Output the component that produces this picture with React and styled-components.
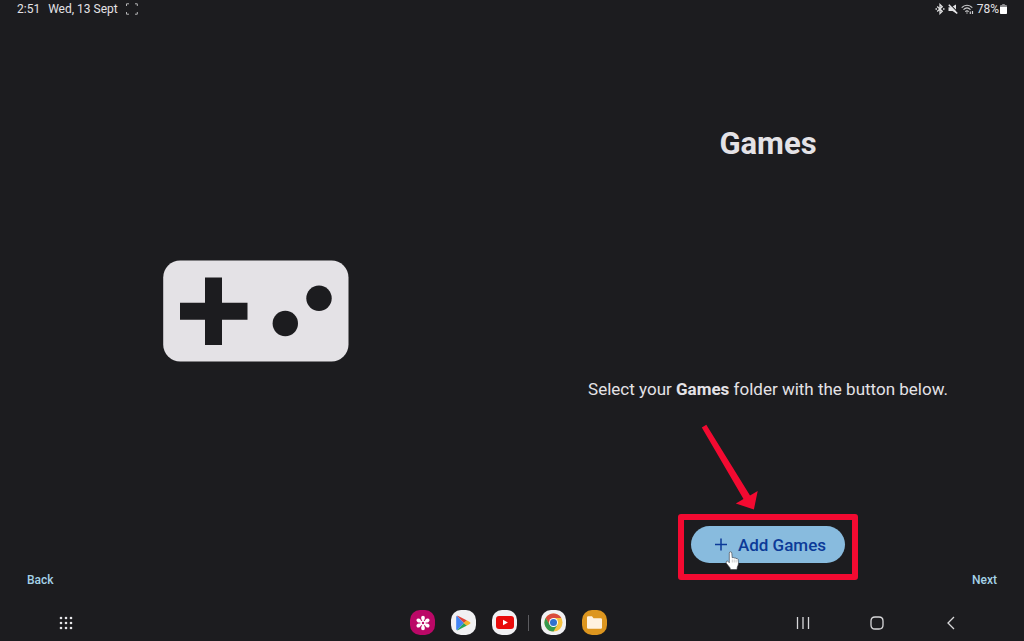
import React from 'react'
import styled, { createGlobalStyle } from 'styled-components'

const GlobalStyle = createGlobalStyle`
  * {
    box-sizing: border-box;
  }

  body {
    margin: 0;
    background: #1c1c1f;
    color: #e4e2e6;
    font-family: Roboto, "Noto Sans", sans-serif;
  }

  button {
    border: 0;
    padding: 0;
    background: none;
    color: inherit;
    font: inherit;
    cursor: pointer;
  }

  svg {
    display: block;
    flex: none;
  }
`

const Screen = styled.div`
  display: grid;
  grid-template-rows: 18px 1fr 27px 48px;
  min-height: 100vh;
`

const StatusBar = styled.header`
  display: flex;
  align-items: center;
  justify-content: space-between;
  padding: 0 17px;
  font-size: 12px;
  line-height: 18px;
`

const StatusGroup = styled.div`
  display: flex;
  align-items: center;
  gap: ${props => props.$gap};
`

const Setup = styled.main`
  display: grid;
  grid-template-columns: 1fr 1fr;
`

const Artwork = styled.section`
  display: flex;
  align-items: center;
  justify-content: center;
  padding-top: 38px;
`

const Step = styled.section`
  display: grid;
  grid-template-rows: 252fr 238fr 58px;
  align-items: center;
  justify-items: center;
`

const Title = styled.h1`
  margin: 0;
  font-size: 31px;
  line-height: 36px;
  font-weight: 700;
`

const Description = styled.p`
  margin: 0;
  font-size: 17px;
  line-height: 24px;
`

const Action = styled.div`
  position: relative;
  align-self: end;
  padding-bottom: 3px;
`

const AddButton = styled.button`
  display: flex;
  align-items: center;
  justify-content: center;
  gap: 10px;
  width: 154px;
  height: 37px;
  padding: 1px 0 0 4px;
  border-radius: 19px;
  background: #88bbde;
  color: #0c3a98;
  font-size: 17px;
  font-weight: 500;
`

const Highlight = styled.div`
  position: absolute;
  top: -12px;
  right: -13px;
  bottom: -14px;
  left: -13px;
  border: 6px solid #f30a31;
  border-radius: 3px;
  pointer-events: none;
`

const Arrow = styled.svg`
  position: absolute;
  top: -102px;
  left: 9px;
  pointer-events: none;
`

const Pointer = styled.svg`
  position: absolute;
  top: 25px;
  left: 34px;
  pointer-events: none;
`

const Pager = styled.nav`
  display: flex;
  align-items: center;
  justify-content: space-between;
  padding: 1px 27px 0;
`

const PagerButton = styled.button`
  color: #a5d2e8;
  font-size: 12px;
  line-height: 16px;
  font-weight: 500;
`

const Taskbar = styled.footer`
  display: grid;
  grid-template-columns: 1fr auto 1fr;
  align-items: center;
  padding: 11px 66px 0 59px;
`

const Dock = styled.div`
  display: flex;
  align-items: center;
  gap: 16px;
`

const Divider = styled.span`
  width: 1px;
  height: 16px;
  margin: 0 -4px 0 -5px;
  background: #5c5c60;
`

const AppIcon = styled.button`
  display: flex;
  align-items: center;
  justify-content: center;
  width: 25px;
  height: 25px;
  border-radius: 10px;
  background: ${props => props.$color};
`

const SystemKeys = styled.div`
  display: flex;
  align-items: center;
  justify-self: end;
  gap: 60px;
`

const Key = styled.button`
  display: flex;
  align-items: center;
  justify-content: center;
  justify-self: start;
  width: 14px;
  height: 14px;
`

const CaptureIcon = () => (
  <svg width="12" height="12" viewBox="0 0 12 12" fill="none" stroke="#b4b4b6" strokeWidth="1">
    <path d="M.5 3V.8H3M9 .8h2.3V3M11.300 9v2.200H9M3 11.200H.5V9" />
  </svg>
)

const BluetoothIcon = () => (
  <svg width="10" height="12" viewBox="0 0 10 12" fill="none" stroke="#dededf" strokeWidth="1.300">
    <path d="M2.200 3.500 7.300 8.300 5 10.500v-9l2.300 2.200L2.200 8.500" />
    <path d="M.5 6h1.500M8 6h1.500" strokeWidth="1.600" />
  </svg>
)

const MutedIcon = () => (
  <svg width="10" height="10" viewBox="0 0 10 10">
    <path d="M.5 3.300h2.600L8 .6v8.600L4.500 7H.5z" fill="#e4e4e6" />
    <path d="M2 .3l8 8.200" stroke="#1c1c1f" strokeWidth="1.200" />
    <path d="M.8.800 9.200 9.400" stroke="#e4e4e6" strokeWidth="1.500" />
  </svg>
)

const WifiIcon = () => (
  <svg width="13" height="11" viewBox="0 0 13 11" fill="none" stroke="#cfcfd1" strokeWidth="1.200">
    <path d="M.7 3.700c3-3.300 7.600-3.300 10.600 0M2.500 5.700c2.100-2.100 4.900-2.100 7 0M4.300 7.600c1.100-1 2.300-1 3.400 0" />
    <circle cx="6" cy="9" r=".7" fill="#cfcfd1" stroke="none" />
    <path d="M9.300 10V7.500M11.500 7v3" />
  </svg>
)

const BatteryIcon = () => (
  <svg width="7" height="10" viewBox="0 0 7 10">
    <path d="M2.200 0h2.600v1H6q1 0 1 1v7q0 1-1 1H1Q0 10 0 9V2q0-1 1-1h1.200z" fill="#8d8d90" />
    <path d="M0 3h7v6q0 1-1 1H1Q0 10 0 9z" fill="#fff" />
  </svg>
)

const Gamepad = () => (
  <svg width="186" height="102" viewBox="0 0 186 102">
    <rect x=".2" y=".5" width="185.300" height="101" rx="17" fill="#e4e2e6" />
    <path d="M42 17.500h17v25.300h25.500v16.900H59V85H42V59.700H17V42.800h25z" fill="#1c1c1f" />
    <circle cx="156" cy="38.300" r="12.700" fill="#1c1c1f" />
    <circle cx="122.300" cy="63.500" r="12.700" fill="#1c1c1f" />
  </svg>
)

const PlusIcon = () => (
  <svg width="14" height="14" viewBox="0 0 14 14" stroke="#0c3a98" strokeWidth="1.500">
    <path d="M7 .5v12M1 6.500h12" />
  </svg>
)

const HandPointer = () => (
  <Pointer width="17" height="20" viewBox="0 0 17 20">
    <path
      d="M4.300 2.200Q4.300.8 5.500.8t1.300 1.400l.4 4.500q1.100-.6 1.900.3 1.100-.5 1.900.5 1.600-.3 2.100.9l.4 3.600q0 2.200-1.200 3.900l-.3 2.700H5.500l-.6-1.900L1.300 12.300q-.6-1.500.4-2.100 1.100-.4 1.800.6l.8.900z"
      fill="#fff"
      stroke="#34343a"
      strokeWidth=".6"
    />
    <path d="M7.300 8.500v3M9.200 8.500v3M11.100 8.800v2.700" stroke="#999" strokeWidth=".5" />
  </Pointer>
)

const GalleryIcon = () => (
  <svg width="16" height="16" viewBox="-8 -8 16 16">
    {[0, 60, 120, 180, 240, 300].map(angle => (
      <g key={angle} transform={`rotate(${angle})`}>
        <path d="M0-1.500V-5" stroke="#fff" strokeWidth="1.800" />
        <ellipse cy="-5" rx="1.900" ry="2.300" fill="#fff" />
      </g>
    ))}
    <circle r="2.600" fill="#fff" />
    <circle r="1.200" fill="#bb0867" />
  </svg>
)

const PlayStoreIcon = () => (
  <svg width="15" height="16" viewBox="0 0 15 16">
    <path d="M1 .8Q.2 1.200.2 2v12q0 .8.8 1.200L8 8z" fill="#4285f4" />
    <path d="M1 .8q.6-.3 1.300.1L11 5.500 8 8z" fill="#e0443a" />
    <path d="M1 15.200q.6.300 1.300-.1L11 10.500 8 8z" fill="#26a45b" />
    <path d="m10.700 5.300 3 1.600q1.500 1.100 0 2.200l-3 1.600L7.600 8z" fill="#f3b52d" />
  </svg>
)

const YoutubeIcon = () => (
  <svg width="18" height="13" viewBox="0 0 18 13">
    <rect width="18" height="13" rx="3" fill="#e90b0b" />
    <path d="M7 3.700v5.600l4.900-2.800z" fill="#fff" />
  </svg>
)

const ChromeIcon = () => (
  <svg width="19" height="19" viewBox="0 0 20 20">
    <circle cx="10" cy="10" r="9.500" fill="#f6c342" />
    <path d="M1.770 5.250A9.500 9.500 0 0 1 18.230 5.250H10L5.900 12.400z" fill="#d94b3d" />
    <path d="M1.770 5.250A9.500 9.500 0 0 0 10 19.500l4.100-7.100H5.900z" fill="#35994f" />
    <circle cx="10" cy="10" r="4.700" fill="#fff" />
    <circle cx="10" cy="10" r="3.700" fill="#2f71cf" />
  </svg>
)

const FolderIcon = () => (
  <svg width="15" height="13" viewBox="0 0 15 13">
    <path d="M0 1.500Q0 .3 1.200.3H5l1.500 1.900h7.300q1.200 0 1.200 1.200v8.300q0 1.100-1.200 1.100H1.200Q0 12.800 0 11.700z" fill="#fff2df" />
  </svg>
)

const AppsIcon = () => (
  <svg width="14" height="14" viewBox="0 0 14 14" fill="#e6e6e8">
    {[2, 7, 12].map(y => [2, 7, 12].map(x => (
      <circle key={`${x}-${y}`} cx={x} cy={y} r="1.300" />
    )))}
  </svg>
)

const KeyIcon = ({ path }) => (
  <svg width="14" height="14" viewBox="0 0 14 14" fill="none" stroke="#d8d8da" strokeWidth="1.300">
    <path d={path} />
  </svg>
)

const App = () => {
  return (
    <Screen>
      <GlobalStyle />
      <StatusBar>
        <StatusGroup $gap="8px">
          <span>2:51</span>
          <span>Wed, 13 Sept</span>
          <CaptureIcon />
        </StatusGroup>
        <StatusGroup $gap="3px">
          <BluetoothIcon />
          <MutedIcon />
          <WifiIcon />
          <StatusGroup $gap="1px">
            <span>78%</span>
            <BatteryIcon />
          </StatusGroup>
        </StatusGroup>
      </StatusBar>

      <Setup>
        <Artwork>
          <Gamepad />
        </Artwork>
        <Step>
          <Title>Games</Title>
          <Description>
            Select your <strong>Games</strong> folder with the button below.
          </Description>
          <Action>
            <AddButton type="button">
              <PlusIcon />
              Add Games
            </AddButton>
            <Highlight />
            <Arrow width="70" height="90" viewBox="0 0 70 90">
              <path d="M1.800 3.500 6.300.8 50 71.500l7.700-4.500-3.800 18.400-18.100-5.800 7.700-4.500z" fill="#f30a31" />
            </Arrow>
            <HandPointer />
          </Action>
        </Step>
      </Setup>

      <Pager>
        <PagerButton type="button">Back</PagerButton>
        <PagerButton type="button">Next</PagerButton>
      </Pager>

      <Taskbar>
        <Key type="button" aria-label="All apps"><AppsIcon /></Key>
        <Dock>
          <AppIcon type="button" aria-label="Gallery" $color="#bb0867"><GalleryIcon /></AppIcon>
          <AppIcon type="button" aria-label="Play Store" $color="#f1f1f3"><PlayStoreIcon /></AppIcon>
          <AppIcon type="button" aria-label="YouTube" $color="#f1f1f3"><YoutubeIcon /></AppIcon>
          <Divider />
          <AppIcon type="button" aria-label="Chrome" $color="#f1f1f3"><ChromeIcon /></AppIcon>
          <AppIcon type="button" aria-label="My Files" $color="#dd961f"><FolderIcon /></AppIcon>
        </Dock>
        <SystemKeys>
          <Key type="button" aria-label="Recents"><KeyIcon path="M1.500 1v12M7 1v12M12.500 1v12" /></Key>
          <Key type="button" aria-label="Home">
            <KeyIcon path="M5 1h4q4 0 4 4v4q0 4-4 4H5q-4 0-4-4V5q0-4 4-4z" />
          </Key>
          <Key type="button" aria-label="Go back"><KeyIcon path="M10 1 4 7l6 6" /></Key>
        </SystemKeys>
      </Taskbar>
    </Screen>
  )
}

export default App
